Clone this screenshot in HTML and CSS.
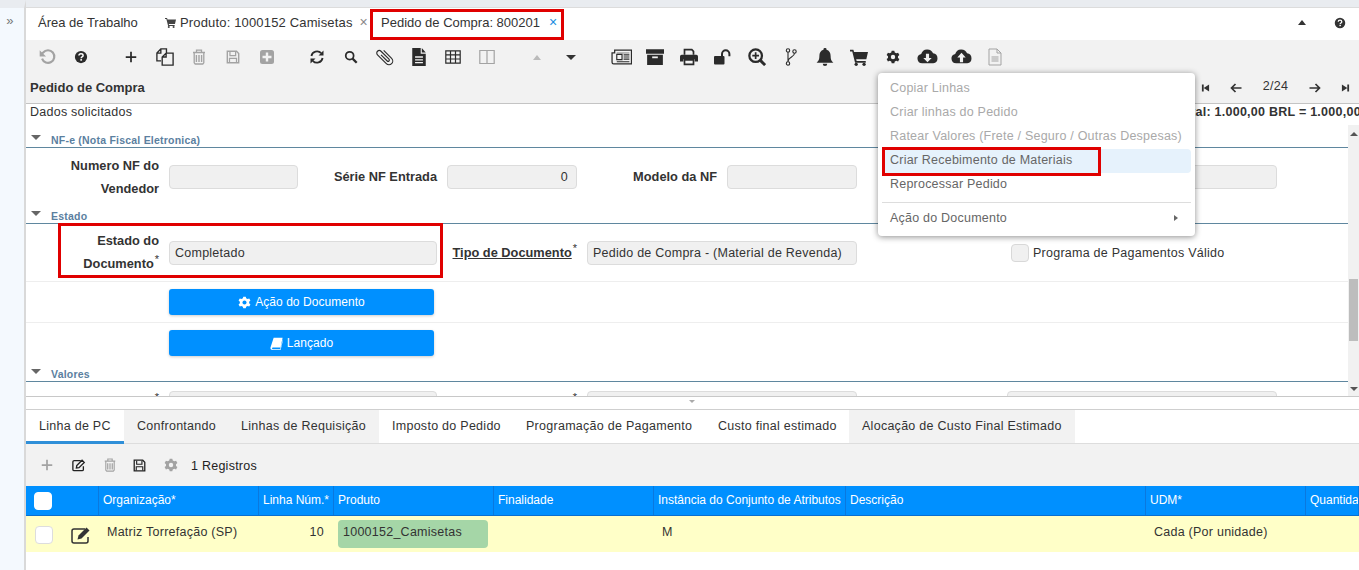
FILE: index.html
```html
<!DOCTYPE html>
<html lang="pt">
<head>
<meta charset="utf-8">
<title>Pedido de Compra</title>
<link rel="stylesheet" href="styles.css">
</head>
<body>
<svg class="defs" xmlns="http://www.w3.org/2000/svg">
  <symbol id="i-undo" viewBox="0 0 16 16"><path d="M3.600 9.500A5.600 5.600 0 1 0 4.600 4L2.600 6" fill="none" stroke="currentColor" stroke-width="1.900"/><path d="M1.500 2v5.600h5.600z" fill="currentColor"/></symbol>
  <symbol id="i-help" viewBox="0 0 16 16"><circle cx="8" cy="8" r="7" fill="currentColor"/><path d="M5.600 6.300C5.700 4.900 6.700 4.200 8 4.200c1.400 0 2.400.8 2.400 2 0 1.800-2.200 1.700-2.200 3.200" fill="none" stroke="#fff" stroke-width="1.700"/><rect x="7.200" y="10.400" width="2" height="1.800" fill="#fff"/></symbol>
  <symbol id="i-plus" viewBox="0 0 16 16"><path d="M7 2h2v5h5v2H9v5H7V9H2V7h5z" fill="currentColor"/></symbol>
  <symbol id="i-copy" viewBox="0 0 16 16"><path d="M4.500 11.500H.8V4.500L4.300.8h5v3.400M5.500 15.200V8L9 4.500h6.200v10.700zM9 4.500V8H5.500M4.300.8v3.700H.8" fill="none" stroke="currentColor" stroke-width="1.200"/></symbol>
  <symbol id="i-trash" viewBox="0 0 16 16"><path d="M2 3.500h12M5.500 3.300V1.200h5v2.100M3.200 3.800v10l1 1.200h7.600l1-1.200v-10" fill="none" stroke="currentColor" stroke-width="1.300"/><path d="M5.400 6v7M8 6v7M10.600 6v7" stroke="currentColor" stroke-width="1.400"/></symbol>
  <symbol id="i-save" viewBox="0 0 16 16"><path d="M1.500 1.500h10.500l2.500 2.500v10.500h-13z" fill="none" stroke="currentColor" stroke-width="1.600"/><path d="M4.500 2v4.500h6.500V2M4 14V9.500h8V14" fill="none" stroke="currentColor" stroke-width="1.400"/></symbol>
  <symbol id="i-plusbox" viewBox="0 0 16 16"><rect x="1" y="1" width="14" height="14" rx="2.500" fill="currentColor"/><path d="M6.800 3.500h2.400v3.300h3.300v2.400H9.200v3.300H6.800V9.200H3.500V6.800h3.300z" fill="#f2f2f2"/></symbol>
  <symbol id="i-refresh" viewBox="0 0 16 16"><path d="M2.400 7a5.700 5.700 0 0 1 9.800-2.800M13.600 9a5.700 5.700 0 0 1-9.800 2.800" fill="none" stroke="currentColor" stroke-width="1.800"/><path d="M14.500 1.500v5h-5zM1.500 14.500v-5h5z" fill="currentColor"/></symbol>
  <symbol id="i-search" viewBox="0 0 16 16"><circle cx="6.500" cy="6.500" r="4.500" fill="none" stroke="currentColor" stroke-width="2"/><path d="M9.800 9.800l4.700 4.700" stroke="currentColor" stroke-width="2.600"/></symbol>
  <symbol id="i-clip" viewBox="0 0 16 16"><path transform="rotate(-45 8 8)" d="M11 3.500V12.500a3 3 0 0 1-6 0V2.500a2 2 0 0 1 4 0V11.500a1 1 0 0 1-2 0V4.500" fill="none" stroke="currentColor" stroke-width=".9"/></symbol>
  <symbol id="i-file" viewBox="0 0 16 16"><path d="M2 0h7.500v5H14v11H2zM10.500 0L14 4h-3.500z" fill="currentColor"/><path d="M4.500 8h7M4.500 10.500h7M4.500 13h7" stroke="#f2f2f2" stroke-width="1.200"/></symbol>
  <symbol id="i-table" viewBox="0 0 16 16"><path d="M.8 1.800h14.400v12.400H.8zM.8 5.800h14.400M.8 10h14.400M5.500 1.800v12.400M10.500 1.800v12.400" fill="none" stroke="currentColor" stroke-width="1.200"/></symbol>
  <symbol id="i-cols" viewBox="0 0 16 16"><path d="M.8 1.500h14.400v13H.8zM8 1.500v13" fill="none" stroke="currentColor" stroke-width="1.200"/></symbol>
  <symbol id="i-news" viewBox="0 0 20 16"><path d="M3.500 1.500h16v13h-17a1.500 1.500 0 0 1-1.500-1.500V4h2.500z" fill="none" stroke="currentColor" stroke-width="1.200"/><path d="M5.500 3.500h12v1.300h-12z" fill="currentColor" opacity=".4"/><path d="M5.500 5.500h5v5h-5z" fill="none" stroke="currentColor" stroke-width="1.100"/><path d="M12 6h5.500M12 8h5.500M12 10h5.500M5.500 12.500h12" stroke="currentColor" stroke-width="1.100"/></symbol>
  <symbol id="i-archive" viewBox="0 0 16 16"><path d="M0 1h16v4H0zM1 6h14v9H1z" fill="currentColor"/><rect x="5.500" y="7.500" width="5" height="1.600" fill="#f2f2f2"/></symbol>
  <symbol id="i-print" viewBox="0 0 16 16"><path d="M4 6V1.500h6.500L12 3v3" fill="none" stroke="currentColor" stroke-width="1.500"/><path d="M1.500 6h13A1.500 1.500 0 0 1 16 7.500V12h-3v-2H3v2H0V7.500A1.500 1.500 0 0 1 1.500 6z" fill="currentColor"/><path d="M4 10.500h8v4H4z" fill="none" stroke="currentColor" stroke-width="1.500"/></symbol>
  <symbol id="i-unlock" viewBox="0 0 18 16"><rect x="0" y="7" width="10.500" height="8.500" rx="1" fill="currentColor"/><path d="M8 7.500V5a3.700 3.700 0 0 1 7.400 0v2.300" fill="none" stroke="currentColor" stroke-width="2"/></symbol>
  <symbol id="i-zoom" viewBox="0 0 16 16"><circle cx="6.800" cy="6.800" r="5.600" fill="none" stroke="currentColor" stroke-width="2"/><path d="M10.800 10.800l4.400 4.400" stroke="currentColor" stroke-width="2.600"/><path d="M6.800 3.800v6M3.800 6.800h6" stroke="currentColor" stroke-width="1.500"/></symbol>
  <symbol id="i-branch" viewBox="0 0 12 18"><circle cx="3" cy="2.500" r="1.700" fill="none" stroke="currentColor" stroke-width="1.100"/><circle cx="3" cy="15.500" r="1.700" fill="none" stroke="currentColor" stroke-width="1.100"/><circle cx="9.500" cy="3.500" r="1.700" fill="none" stroke="currentColor" stroke-width="1.100"/><path d="M3 4.300v9.500M9.500 5.300c0 4-6 3.500-6.500 8" fill="none" stroke="currentColor" stroke-width="1.100"/></symbol>
  <symbol id="i-bell" viewBox="0 0 16 16"><path d="M8 0a1.300 1.300 0 0 1 1.300 1.600C11.800 2.200 13 4.300 13 7c0 3.500 1 4.500 2.500 6H.5C2 11.500 3 10.500 3 7c0-2.700 1.200-4.800 3.700-5.400A1.300 1.300 0 0 1 8 0zM6 14h4a2 2 0 0 1-4 0z" fill="currentColor"/></symbol>
  <symbol id="i-cart" viewBox="0 0 16 16"><path d="M0 1.500h3l.6 2H16l-1.500 6.500H5.500l.4 1.500H14V13H4.500L2 3H0z" fill="currentColor"/><circle cx="5.500" cy="14.500" r="1.500" fill="currentColor"/><circle cx="12.500" cy="14.500" r="1.500" fill="currentColor"/></symbol>
  <symbol id="i-cog" viewBox="0 0 16 16"><path d="M6.500 .8h3l.5 2.100 1.800.9 2-.8 1.500 2.600-1.600 1.400v2l1.600 1.400-1.500 2.600-2-.8-1.800.9-.5 2.100h-3L6 13.100l-1.800-.9-2 .8L.7 10.400l1.600-1.400V7L.7 5.600l1.500-2.600 2 .8L6 2.900z" fill="currentColor"/><circle cx="8" cy="8" r="2.500" fill="#f2f2f2"/></symbol>
  <symbol id="i-cogw" viewBox="0 0 16 16"><path d="M6.500 .8h3l.5 2.100 1.800.9 2-.8 1.500 2.600-1.600 1.400v2l1.600 1.400-1.500 2.600-2-.8-1.800.9-.5 2.100h-3L6 13.100l-1.800-.9-2 .8L.7 10.400l1.600-1.400V7L.7 5.600l1.500-2.600 2 .8L6 2.900z" fill="currentColor"/><circle cx="8" cy="8" r="2.500" fill="#0090ff"/></symbol>
  <symbol id="i-down" viewBox="0 0 20 16"><path d="M5 14a4.500 4.500 0 0 1-1-8.900A6 6 0 0 1 15.300 4.500 4.800 4.800 0 0 1 15.500 14z" fill="currentColor"/><path d="M8.500 5h3v4h2.500L10 13 6 9h2.500z" fill="#f2f2f2"/></symbol>
  <symbol id="i-up" viewBox="0 0 20 16"><path d="M5 14a4.500 4.500 0 0 1-1-8.900A6 6 0 0 1 15.300 4.500 4.800 4.800 0 0 1 15.500 14z" fill="currentColor"/><path d="M10 4l4 4.500h-2.500V13h-3V8.500H6z" fill="#f2f2f2"/></symbol>
  <symbol id="i-doc" viewBox="0 0 14 18"><path d="M1 1h8l4 4v12H1zM9 1v4h4" fill="none" stroke="currentColor" stroke-width="1"/><path d="M3.500 9h7M3.500 11h7M3.500 13h7" stroke="currentColor" stroke-width="1"/></symbol>
  <symbol id="i-first" viewBox="0 0 10 10"><path d="M1 1h2v8H1zM9 1v8L3 5z" fill="currentColor"/></symbol>
  <symbol id="i-last" viewBox="0 0 10 10"><path d="M9 1H7v8h2zM1 1v8l6-4z" fill="currentColor"/></symbol>
  <symbol id="i-left" viewBox="0 0 12 10"><path d="M11.500 5H2M5.500 1L1.500 5l4 4" fill="none" stroke="currentColor" stroke-width="1.700"/></symbol>
  <symbol id="i-right" viewBox="0 0 12 10"><path d="M.5 5H10M6.500 1l4 4-4 4" fill="none" stroke="currentColor" stroke-width="1.700"/></symbol>
  <symbol id="i-edit" viewBox="0 0 16 16"><path d="M13 9.500V13a1.500 1.500 0 0 1-1.500 1.500h-9A1.500 1.500 0 0 1 1 13V4.500A1.500 1.500 0 0 1 2.500 3H10" fill="none" stroke="currentColor" stroke-width="1.500"/><path d="M5.500 8.500L11.500 2.500l2.500 2.500-6 6-3 .5z" fill="none" stroke="currentColor" stroke-width="1.500"/></symbol>
  <symbol id="i-editf" viewBox="0 0 22 18"><path d="M17 11v4a2 2 0 0 1-2 2H3a2 2 0 0 1-2-2V5a2 2 0 0 1 2-2h11" fill="none" stroke="currentColor" stroke-width="1.500"/><path d="M7.500 9.500L15.500 1.500 18.500 4.500 10.500 12.500l-4 1z" fill="currentColor"/></symbol>
  <symbol id="i-book" viewBox="0 0 16 16"><path d="M4.500 1H15.500L13 13H3.500A1 1 0 0 0 3.500 15H12.500L15.800 3 16 4 13 16H3A2.500 2.500 0 0 1 .6 13z" fill="currentColor"/></symbol>
</svg>

<aside class="rail"><span class="rail-arrow">»</span></aside>

<main class="app">
  <div class="strip"></div>

  <nav class="doc-tabs">
    <span class="doc-tab">Área de Trabalho</span>
    <span class="doc-tab doc-tab-cart"><svg class="ic-cart"><use href="#i-cart"/></svg>Produto: 1000152 Camisetas<span class="close">×</span></span>
    <span class="doc-tab doc-tab-active">Pedido de Compra: 800201<span class="close close-on">×</span></span>
    <span class="doc-tools"><span class="tri-up"></span><svg class="ic-help"><use href="#i-help"/></svg></span>
  </nav>

  <section class="toolbar-block">
    <div class="toolbar">
      <div class="group">
        <span class="tb dim"><svg class="s18"><use href="#i-undo"/></svg></span>
        <span class="tb"><svg class="s14"><use href="#i-help"/></svg></span>
      </div>
      <div class="group">
        <span class="tb"><svg class="s14"><use href="#i-plus"/></svg></span>
        <span class="tb"><svg class="s18"><use href="#i-copy"/></svg></span>
        <span class="tb dim"><svg><use href="#i-trash"/></svg></span>
        <span class="tb dim"><svg class="s14"><use href="#i-save"/></svg></span>
        <span class="tb dim"><svg><use href="#i-plusbox"/></svg></span>
      </div>
      <div class="group">
        <span class="tb"><svg><use href="#i-refresh"/></svg></span>
        <span class="tb"><svg class="s14"><use href="#i-search"/></svg></span>
        <span class="tb"><svg class="s20"><use href="#i-clip"/></svg></span>
        <span class="tb"><svg class="s18"><use href="#i-file"/></svg></span>
        <span class="tb"><svg><use href="#i-table"/></svg></span>
        <span class="tb dim"><svg><use href="#i-cols"/></svg></span>
      </div>
      <div class="group">
        <span class="tb"><span class="tri-up tri-dim"></span></span>
        <span class="tb"><span class="tri-down"></span></span>
      </div>
      <div class="group">
        <span class="tb"><svg class="s21"><use href="#i-news"/></svg></span>
        <span class="tb"><svg class="s18"><use href="#i-archive"/></svg></span>
        <span class="tb"><svg class="s18"><use href="#i-print"/></svg></span>
        <span class="tb"><svg class="s18"><use href="#i-unlock"/></svg></span>
        <span class="tb"><svg class="s18"><use href="#i-zoom"/></svg></span>
        <span class="tb"><svg class="s18"><use href="#i-branch"/></svg></span>
        <span class="tb"><svg class="s18"><use href="#i-bell"/></svg></span>
        <span class="tb"><svg class="s18"><use href="#i-cart"/></svg></span>
        <span class="tb"><svg class="s14"><use href="#i-cog"/></svg></span>
        <span class="tb"><svg class="s21"><use href="#i-down"/></svg></span>
        <span class="tb"><svg class="s21"><use href="#i-up"/></svg></span>
        <span class="tb dim"><svg class="s18"><use href="#i-doc"/></svg></span>
      </div>
    </div>
    <div class="title-row">
      <strong class="title">Pedido de Compra</strong>
      <div class="pager">
        <svg class="pg-first"><use href="#i-first"/></svg>
        <svg class="pg-arrow"><use href="#i-left"/></svg>
        <span class="pg-num">2/24</span>
        <svg class="pg-arrow"><use href="#i-right"/></svg>
        <svg class="pg-first"><use href="#i-last"/></svg>
      </div>
    </div>
  </section>

  <div class="summary">
    <span>Dados solicitados</span>
    <strong class="total">Total: 1.000,00 BRL = 1.000,00 BRL</strong>
  </div>

  <div class="split-top">
    <div class="form">
      <h3 class="section"><span class="sec-tri"></span>NF-e (Nota Fiscal Eletronica)</h3>
      <div class="row row-nf">
        <label class="lab">Numero NF do Vendedor</label>
        <span class="inp"></span>
        <label class="lab">Série NF Entrada</label>
        <span class="inp inp-num">0</span>
        <label class="lab">Modelo da NF</label>
        <span class="inp"></span>
        <label class="lab"></label>
        <span class="inp"></span>
      </div>

      <h3 class="section section-estado"><span class="sec-tri"></span>Estado</h3>
      <div class="row row-estado">
        <label class="lab">Estado do Documento<sup>*</sup></label>
        <span class="inp span-left">Completado</span>
        <label class="lab lab-link"><u>Tipo de Documento</u><sup>*</sup></label>
        <span class="inp span-mid">Pedido de Compra - (Material de Revenda)</span>
        <span class="check-cell"><span class="check"></span>Programa de Pagamentos Válido</span>
      </div>

      <div class="btn-row"><button class="btn" type="button"><svg class="btn-ic"><use href="#i-cogw"/></svg>Ação do Documento</button></div>
      <div class="btn-row btn-row-last"><button class="btn" type="button"><svg class="btn-ic"><use href="#i-book"/></svg>Lançado</button></div>

      <h3 class="section section-valores"><span class="sec-tri"></span>Valores</h3>
      <div class="row row-valores">
        <label class="lab"><sup>*</sup></label>
        <span class="inp span-left"></span>
        <label class="lab"><sup>*</sup></label>
        <span class="inp span-mid"></span>
        <span class="inp inp-wide"></span>
      </div>
    </div>
    <div class="scrollbar">
      <span class="sb-up"></span>
      <span class="sb-thumb"></span>
      <span class="sb-down"></span>
    </div>
  </div>

  <div class="splitter"><span class="split-tri"></span></div>

  <nav class="sub-tabs">
    <span class="sub-tab sub-on st1">Linha de PC</span>
    <span class="sub-tab sub-grey st2">Confrontando</span>
    <span class="sub-tab sub-grey st3">Linhas de Requisição</span>
    <span class="sub-tab st4">Imposto do Pedido</span>
    <span class="sub-tab st5">Programação de Pagamento</span>
    <span class="sub-tab st6">Custo final estimado</span>
    <span class="sub-tab sub-grey st7">Alocação de Custo Final Estimado</span>
  </nav>

  <div class="grid-tools">
    <span class="gt gt-plus dim"><svg><use href="#i-plus"/></svg></span>
    <span class="gt gt-edit"><svg><use href="#i-edit"/></svg></span>
    <span class="gt gt-trash dim"><svg><use href="#i-trash"/></svg></span>
    <span class="gt gt-save"><svg class="s13"><use href="#i-save"/></svg></span>
    <span class="gt gt-cog dim"><svg><use href="#i-cog"/></svg></span>
    <span class="records">1 Registros</span>
  </div>

  <div class="grid grid-head">
    <div class="cell cell-check"><span class="box box-head"></span></div>
    <div class="cell">Organização*</div>
    <div class="cell">Linha Núm.*</div>
    <div class="cell">Produto</div>
    <div class="cell">Finalidade</div>
    <div class="cell">Instância do Conjunto de Atributos</div>
    <div class="cell">Descrição</div>
    <div class="cell">UDM*</div>
    <div class="cell">Quantidade</div>
  </div>
  <div class="grid grid-row">
    <div class="rcell rcell-check"><span class="box"></span><svg class="row-edit"><use href="#i-editf"/></svg></div>
    <div class="rcell">Matriz Torrefação (SP)</div>
    <div class="rcell rcell-num">10</div>
    <div class="rcell rcell-prod"><span class="pill">1000152_Camisetas</span></div>
    <div class="rcell"></div>
    <div class="rcell">M</div>
    <div class="rcell"></div>
    <div class="rcell">Cada (Por unidade)</div>
    <div class="rcell"></div>
  </div>
</main>

<div class="menu">
  <div class="mi off">Copiar Linhas</div>
  <div class="mi off">Criar linhas do Pedido</div>
  <div class="mi off">Ratear Valores (Frete / Seguro / Outras Despesas)</div>
  <div class="mi hot">Criar Recebimento de Materiais</div>
  <div class="mi">Reprocessar Pedido</div>
  <div class="menu-sep"></div>
  <div class="mi mi-sub">Ação do Documento<span class="sub-arrow"></span></div>
</div>

<div class="mark mark-tab"></div>
<div class="mark mark-estado"></div>
<div class="mark mark-menu"></div>
</body>
</html>
```

FILE: styles.css
```css
* { box-sizing: border-box; }
html, body { margin: 0; height: 570px; overflow: hidden; }
body {
  display: flex;
  width: 1359px;
  font-family: "Liberation Sans", Arial, sans-serif;
  font-size: 12.500px;
  letter-spacing: .25px;
  color: #333;
  background: #fff;
  position: relative;
}
.defs { position: absolute; width: 0; height: 0; overflow: hidden; }
.rail {
  flex: 0 0 26px;
  background: #f4f9fe;
  border-right: 2px solid #d9d9d9;
  border-top: 8px solid #e9ecf0;
  padding-top: 6px;
  text-align: center;
}
.rail-arrow { color: #777; font-size: 13px; line-height: 13px; display: block; padding-right: 4px; }
.app { flex: 1; min-width: 0; display: flex; flex-direction: column; height: 570px; overflow: hidden; }
.strip { height: 8px; background: #e9ecf0; border-bottom: 1px solid #dcdcdc; }

/* document tabs */
.doc-tabs { height: 32px; display: flex; align-items: center; font-size: 13px; letter-spacing: 0; }
.doc-tab { display: flex; align-items: center; white-space: nowrap; height: 32px; padding-bottom: 4px; }
.doc-tab:first-child { padding-left: 12px; width: 139px; }
.doc-tab-cart { width: 206px; letter-spacing: .16px; }
.ic-cart { width: 11px; height: 11px; color: #444; margin-right: 4px; }
.close { color: #888; margin-left: 7px; font-size: 14px; }
.doc-tab-active { padding-left: 10px; width: 186px; border-bottom: 2px solid #4a7fc0; padding-bottom: 2px; }
.close-on { color: #1a8be0; margin-left: 9px; }
.doc-tools { margin-left: auto; display: flex; align-items: center; padding-right: 13px; padding-bottom: 3px; }
.tri-up { display: block; width: 0; height: 0; border-left: 4px solid transparent; border-right: 4px solid transparent; border-bottom: 5px solid #333; margin-right: 28px; }
.tri-dim { border-bottom-color: #bbb; margin: 0; }
.tri-down { display: block; width: 0; height: 0; border-left: 5px solid transparent; border-right: 5px solid transparent; border-top: 5px solid #333; }
.ic-help { width: 12px; height: 12px; color: #333; }

/* main toolbar */
.toolbar-block { height: 64px; background: #f2f2f2; border-bottom: 1px solid #c4c4c4; }
.toolbar { height: 34px; display: flex; padding-left: 4px; gap: 16px; }
.group { display: flex; }
.tb { width: 34px; height: 34px; display: flex; align-items: center; justify-content: center; color: #2b2b2b; }
.tb svg { width: 16px; height: 16px; }
.tb svg.s14 { width: 14px; height: 14px; }
.tb svg.s18 { width: 18px; height: 18px; }
.tb svg.s20 { width: 20px; height: 20px; }
.tb svg.s21 { width: 21px; height: 18px; }
.dim { color: #a3a3a3 !important; }
.title-row { height: 29px; display: flex; align-items: center; justify-content: space-between; padding: 0 0 2px 4px; }
.title { font-size: 13px; letter-spacing: 0; color: #333; }
.pager { display: flex; align-items: center; width: 158px; justify-content: space-between; padding-right: 9px; color: #333; }
.pg-first { width: 9px; height: 10px; }
.pg-arrow { width: 12px; height: 10px; }
.pg-num { margin-bottom: 4px; }

.summary {
  height: 21px;
  display: flex;
  justify-content: space-between;
  align-items: center;
  padding: 0 0 6px 4px;
  overflow: hidden;
  white-space: nowrap;
}
.total { flex: none; margin-right: -32px; }

/* form */
.split-top { height: 272px; display: flex; border-bottom: 1px solid #c8c8c8; overflow: hidden; }
.form { flex: 1; min-width: 0; overflow: hidden; }
.section {
  margin: 0;
  height: 23px;
  border-bottom: 1px solid #5f879f;
  color: #5b7f9f;
  font-size: 10.500px;
  line-height: 12px;
  font-weight: bold;
  letter-spacing: .22px;
  padding: 9px 0 0 25px;
  position: relative;
}
.sec-tri { position: absolute; left: 5px; top: 10px; border-left: 5px solid transparent; border-right: 5px solid transparent; border-top: 5px solid #666; }
.section-estado { height: 18px; padding-top: 4px; }
.section-estado .sec-tri { top: 5px; }
.section-valores { height: 18px; padding-top: 4px; }
.section-valores .sec-tri { top: 5px; }
.row {
  display: grid;
  grid-template-columns: 133px 129px 129px 130px 130px 130px 130px 270px;
  column-gap: 10px;
  align-items: center;
}
.row-nf { height: 58px; }
.row-estado { height: 58px; border-bottom: 1px solid #eee; }
.row-valores { height: 40px; align-items: start; padding-top: 9px; }
.lab { text-align: right; line-height: 23px; color: #333; font-weight: bold; font-size: 12.800px; letter-spacing: 0; margin-top: -1px; }
.lab sup { font-size: 11px; font-weight: normal; line-height: 0; margin-left: 1px; }
.lab-link { white-space: nowrap; margin-top: 0; }
.inp {
  height: 24px;
  background: #f0f0f0;
  border: 1px solid #dcdcdc;
  border-radius: 4px;
  padding: 0 5px;
  line-height: 22px;
  white-space: nowrap;
  overflow: hidden;
}
.inp-num { text-align: right; padding-right: 8px; }
.span-left { grid-column: span 2; }
.span-mid { grid-column: span 2; }
.inp-wide { grid-column: 8; }
.check-cell { grid-column: 8; display: flex; align-items: center; gap: 4px; white-space: nowrap; padding-left: 4px; }
.check { width: 18px; height: 18px; background: #f0f0f0; border: 1px solid #d8d8d8; border-radius: 4px; }
.btn-row { height: 41px; padding: 7px 0 0 143px; border-bottom: 1px solid #eee; }
.btn-row-last { border-bottom: 0; }
.btn {
  width: 265px;
  height: 26px;
  border: 0;
  border-radius: 3px;
  background: #0090ff;
  color: #fff;
  font: 12px "Liberation Sans", Arial, sans-serif;
  letter-spacing: .05px;
  display: flex;
  align-items: center;
  justify-content: center;
  gap: 4px;
  padding: 0;
  box-shadow: 0 1px 3px rgba(0,0,0,.2);
}
.btn-ic { width: 13px; height: 13px; color: #fff; }

/* scrollbar */
.scrollbar { flex: 0 0 11px; background: #f1f1f1; display: flex; flex-direction: column; align-items: center; }
.sb-up { margin-top: 7px; border-left: 4px solid transparent; border-right: 4px solid transparent; border-bottom: 4px solid #555; }
.sb-thumb { width: 9px; height: 62px; background: #bdbdbd; margin-top: 143px; }
.sb-down { margin-top: auto; margin-bottom: 5px; border-left: 4px solid transparent; border-right: 4px solid transparent; border-top: 4px solid #555; }

.splitter { height: 13px; border-bottom: 1px solid #cfcfcf; display: flex; justify-content: center; }
.split-tri { width: 0; height: 0; border-left: 3px solid transparent; border-right: 3px solid transparent; border-top: 3px solid #aaa; margin-top: 3px; margin-right: 2px; }

/* detail tabs */
.sub-tabs { height: 34px; flex: none; display: flex; border-bottom: 1px solid #ddd; letter-spacing: .27px; }
.sub-tab { padding: 9px 0 0 13px; height: 34px; white-space: nowrap; }
.sub-on { border-bottom: 3px solid #2f8fd8; }
.sub-grey { background: #f2f2f2; border-bottom: 1px solid #ddd; }
.st1 { width: 98px; }
.st2 { width: 104px; }
.st3 { width: 151px; }
.st4 { width: 134px; }
.st5 { width: 192px; }
.st6 { width: 144px; }
.st7 { width: 226px; }

.grid-tools { height: 42px; flex: none; background: #f2f2f2; display: flex; align-items: center; color: #222; }
.gt { display: flex; justify-content: center; }
.gt svg { width: 14px; height: 14px; }
.gt svg.s13 { width: 13px; height: 13px; }
.gt-plus { width: 42px; }
.gt-edit { width: 22px; }
.gt-trash { width: 40px; }
.gt-save { width: 18px; }
.gt-cog { width: 46px; }
.records { margin-left: -3px; padding-top: 1px; }

.grid { display: grid; flex: none; grid-template-columns: 73px 160px 75px 160px 160px 192px 300px 160px 1fr; }
.grid-head { height: 30px; background: #0090ff; color: #fff; border-bottom: 1px solid #0a6fd0; font-size: 12px; letter-spacing: 0; }
.cell { display: flex; align-items: center; padding: 0 0 2px 4px; border-right: 1px solid #0a78de; white-space: nowrap; overflow: hidden; }
.cell-check { padding: 0 0 0 8px; }
.box { display: block; width: 18px; height: 18px; background: #fff; border: 1px solid #ddd; border-radius: 4px; }
.box-head { border-color: #fff; }
.grid-row { height: 36px; background: #ffffc8; }
.rcell { display: flex; align-items: center; padding: 0 0 4px 8px; white-space: nowrap; }
.rcell-check { padding: 2px 0 0 9px; gap: 18px; }
.row-edit { width: 22px; height: 18px; color: #333; }
.rcell-num { justify-content: flex-end; padding-right: 10px; }
.rcell-prod { padding: 4px 0 4px 4px; }
.pill { width: 150px; height: 28px; background: #a5d6a7; border-radius: 4px; padding: 0 5px; line-height: 24px; display: block; }

/* popup menu */
.menu {
  position: absolute;
  left: 878px;
  top: 73px;
  width: 317px;
  height: 163px;
  background: #fff;
  border-radius: 4px;
  box-shadow: 0 1px 6px rgba(0,0,0,.45);
  padding: 4px 4px;
  letter-spacing: .22px;
  color: #666;
}
.mi { height: 24px; line-height: 23px; padding-left: 8px; border-radius: 4px; position: relative; white-space: nowrap; }
.off { color: #a9a9a9; }
.hot { background: #e6f2fc; }
.menu-sep { height: 1px; background: #ddd; margin: 5px 0 3px; }
.mi-sub { line-height: 24px; }
.sub-arrow { position: absolute; right: 13px; top: 9px; border-top: 3.500px solid transparent; border-bottom: 3.500px solid transparent; border-left: 4px solid #666; }

/* red annotations */
.mark { position: absolute; border: 3px solid #e00000; pointer-events: none; }
.mark-tab { left: 370px; top: 9px; width: 194px; height: 31px; }
.mark-estado { left: 58px; top: 223px; width: 385px; height: 55px; }
.mark-menu { left: 882px; top: 147px; width: 219px; height: 29px; }
```
